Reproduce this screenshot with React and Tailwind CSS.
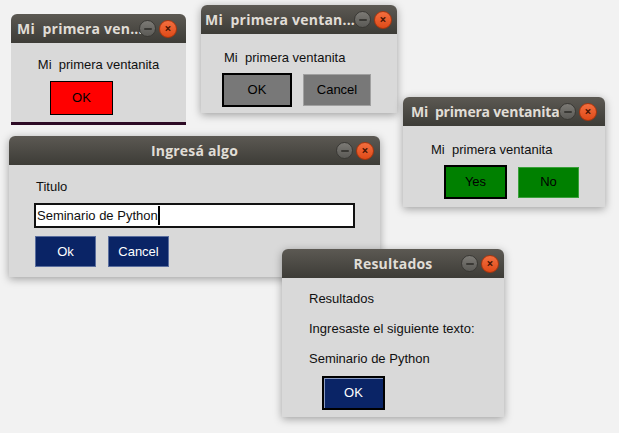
import React from "react";

const TitleButtons = ({ right }) => (
  <div
    className="absolute top-1/2 -translate-y-1/2 flex items-center gap-[3px]"
    style={{ right }}
  >
    <span className="w-[17px] h-[17px] rounded-full bg-gradient-to-b from-[#7c7a75] to-[#5b5a56] border border-[#3a3935] flex items-center justify-center">
      <span className="w-[8px] h-[2px] bg-[#3a3935] rounded" />
    </span>
    <span className="w-[18px] h-[18px] rounded-full bg-gradient-to-b from-[#f36e3e] to-[#df4a16] border border-[#a8360f] flex items-center justify-center text-[#4a1604] text-[12px] leading-none">
      ×
    </span>
  </div>
);

const Window = ({ left, top, width, title, center, tight, pad = 6, btnRight = 5, shadow = true, children, footer }) => (
  <div
    className={
      "absolute rounded-t-[6px] overflow-hidden " +
      (shadow ? "shadow-[0_2px_8px_rgba(0,0,0,0.35)]" : "")
    }
    style={{ left, top, width }}
  >
    <div
      className={
        "relative h-[29px] bg-gradient-to-b from-[#5c5953] to-[#3d3c37] flex items-center text-[#e0ddd6] text-[14px] font-bold whitespace-pre " +
        (center ? "justify-center" : "")
      }
      style={{ fontFamily: '"Open Sans", "DejaVu Sans", sans-serif', paddingLeft: center ? 0 : pad }}
    >
      <span className={tight ? "tracking-[-0.2px]" : "tracking-[0.2px]"}>{title}</span>
      <TitleButtons right={btnRight} />
    </div>
    <div
      className="bg-[#d9d9d9] text-[13px] text-[#101010]"
      style={{ fontFamily: '"Liberation Sans", Arial, sans-serif' }}
    >
      {children}
    </div>
    {footer}
  </div>
);

export default function App() {
  return (
    <div className="relative w-[619px] h-[433px] bg-[#f2f2f2] overflow-hidden">
      <Window
        left={11}
        top={14}
        width={175}
        title="Mi  primera ven..."
        pad={6}
        btnRight={9}
        shadow={false}
        footer={<div className="h-[3px] bg-[#2c0a24]" />}
      >
        <div className="h-[79px] flex flex-col">
          <div className="pt-[14px] text-center leading-[15px] whitespace-pre">Mi  primera ventanita</div>
          <div className="mt-[9px] ml-[39px] w-[63px] h-[34px] bg-[#ff0000] border border-black flex items-center justify-center text-black">
            OK
          </div>
        </div>
      </Window>

      <Window left={201} top={5} width={196} title="Mi  primera ventan..." pad={4}>
        <div className="h-[79px] flex flex-col">
          <div className="pt-[16px] pl-[23px] leading-[15px] whitespace-pre">Mi  primera ventanita</div>
          <div className="mt-[8px] ml-[21px] flex items-center gap-[11px]">
            <div className="w-[70px] h-[34px] bg-[#787878] border-2 border-black flex items-center justify-center text-black">
              OK
            </div>
            <div className="w-[68px] h-[32px] bg-[#787878] border border-[#a0a0a0] flex items-center justify-center text-black">
              Cancel
            </div>
          </div>
        </div>
      </Window>

      <Window left={403} top={97} width={202} title="Mi  primera ventanita" pad={8} btnRight={8} tight>
        <div className="h-[81px] flex flex-col">
          <div className="pt-[16px] pl-[28px] leading-[15px] whitespace-pre">Mi  primera ventanita</div>
          <div className="mt-[8px] ml-[41px] flex items-center gap-[11px]">
            <div className="w-[63px] h-[34px] bg-[#008000] border-2 border-black flex items-center justify-center text-black">
              Yes
            </div>
            <div className="w-[61px] h-[31px] bg-[#008000] border border-[#3aa03a] flex items-center justify-center text-black">
              No
            </div>
          </div>
        </div>
      </Window>

      <Window left={9} top={136} width={371} title="Ingresá algo" center btnRight={6}>
        <div className="h-[112px] flex flex-col pl-[25px]">
          <div className="pt-[14px] pl-[2px] leading-[15px]">Titulo</div>
          <div className="mt-[9px] w-[321px] h-[25px] bg-white border-2 border-[#111] flex items-center pl-[1px] text-[13px]">
            <span>Seminario de Python</span>
            <span className="w-[2px] h-[19px] bg-black" />
          </div>
          <div className="mt-[8px] ml-[1px] flex items-center gap-[12px]">
            <div className="w-[61px] h-[31px] bg-[#0a2466] border border-[#5a6e9e] flex items-center justify-center text-white">
              Ok
            </div>
            <div className="w-[61px] h-[31px] bg-[#0a2466] border border-[#5a6e9e] flex items-center justify-center text-white">
              Cancel
            </div>
          </div>
        </div>
      </Window>

      <Window left={282} top={249} width={222} title="Resultados" center>
        <div className="h-[139px] flex flex-col pl-[27px]">
          <div className="pt-[13px] leading-[15px]">Resultados</div>
          <div className="mt-[15px] leading-[15px]">Ingresaste el siguiente texto:</div>
          <div className="mt-[15px] leading-[15px]">Seminario de Python</div>
          <div className="mt-[10px] ml-[13px] w-[63px] h-[34px] bg-[#0a2466] border-2 border-black shadow-[inset_1px_1px_0_#8a9ac0] flex items-center justify-center text-white">
            OK
          </div>
        </div>
      </Window>
    </div>
  );
}
